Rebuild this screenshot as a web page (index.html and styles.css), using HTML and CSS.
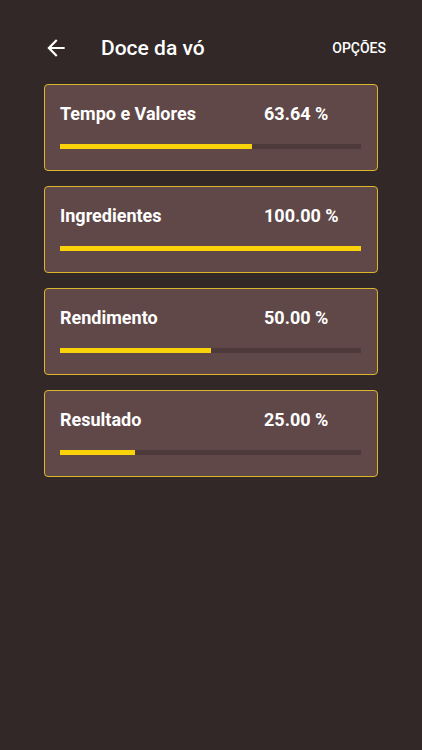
FILE: index.html
```html
<!DOCTYPE html>
<html lang="pt">
<head>
  <meta charset="UTF-8">
  <meta name="viewport" content="width=device-width, initial-scale=1">
  <title>Doce da vó</title>
  <link rel="stylesheet" href="styles.css">
</head>
<body>
  <header class="toolbar">
    <button class="back" aria-label="Voltar">
      <svg viewBox="0 0 24 24" width="26" height="26"><path fill="#fff" d="M20 11H7.83l5.59-5.59L12 4l-8 8 8 8 1.41-1.41L7.83 13H20v-2z"/></svg>
    </button>
    <h1 class="title">Doce da vó</h1>
    <span class="options">OPÇÕES</span>
  </header>

  <main class="list">
    <div class="card">
      <span class="label">Tempo e Valores</span>
      <span class="percent">63.64 %</span>
      <div class="track"><div class="fill" style="width: 63.64%"></div></div>
    </div>
    <div class="card">
      <span class="label">Ingredientes</span>
      <span class="percent">100.00 %</span>
      <div class="track"><div class="fill" style="width: 100%"></div></div>
    </div>
    <div class="card">
      <span class="label">Rendimento</span>
      <span class="percent">50.00 %</span>
      <div class="track"><div class="fill" style="width: 50%"></div></div>
    </div>
    <div class="card">
      <span class="label">Resultado</span>
      <span class="percent">25.00 %</span>
      <div class="track"><div class="fill" style="width: 25%"></div></div>
    </div>
  </main>
</body>
</html>
```

FILE: styles.css
```css
body {
  margin: 0;
  background-color: #332828;
  font-family: Roboto, "Liberation Sans", sans-serif;
  color: #fff;
  min-height: 750px;
}
.toolbar {
  display: flex;
  align-items: center;
  height: 56px;
  margin-top: 20px;
  padding: 0 36px 0 43px;
}
.back {
  display: flex;
  padding: 0;
  border: none;
  background: none;
  width: 26px;
  height: 26px;
}
.title {
  margin: 0 0 0 32px;
  font-size: 21px;
  font-weight: 500;
  flex: 1;
}
.options {
  font-size: 14px;
  font-weight: 500;
}
.list {
  display: flex;
  flex-direction: column;
  gap: 15px;
  margin: 8px 44px 0 44px;
}
.card {
  display: grid;
  grid-template-columns: 204px 1fr;
  align-content: start;
  row-gap: 20px;
  height: 87px;
  box-sizing: border-box;
  padding: 18px 16px 0 15px;
  background-color: #604848;
  border: 1.5px solid #dcb52a;
  border-radius: 4px;
}
.label, .percent {
  font-size: 18px;
  font-weight: 700;
  line-height: 21px;
}
.track {
  grid-column: 1 / 3;
  height: 5px;
  background-color: #4e3a3a;
}
.fill {
  height: 100%;
  background-color: #fad20a;
}
```
